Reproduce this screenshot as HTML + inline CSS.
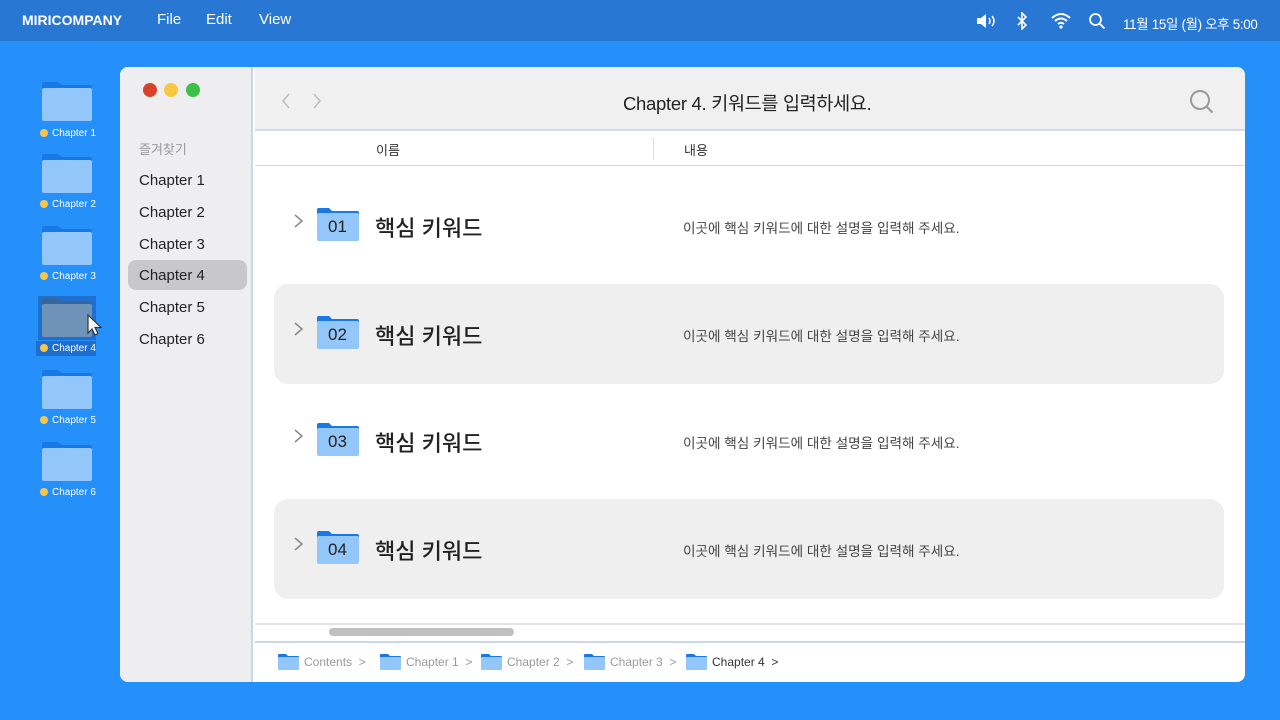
<!DOCTYPE html>
<html><head><meta charset="utf-8">
<style>
*{margin:0;padding:0;box-sizing:border-box}
body{width:1280px;height:720px;overflow:hidden;background:#2590fa;font-family:"Liberation Sans","Noto Sans CJK KR",sans-serif;position:relative}
.a{position:absolute}
.menu{left:0;top:0;width:1280px;height:41px;background:#2877d3;color:#fff}
.menu span{position:absolute;top:11px;font-size:15px}
.dl{font-size:10px;color:#fff;white-space:nowrap}
.dot{display:inline-block;width:8px;height:8px;border-radius:50%;background:#f7c648;margin-right:4px;vertical-align:-1px}
.win{left:120px;top:67px;width:1125px;height:615px;background:#fff;border-radius:8px;overflow:hidden}
.side{left:0;top:0;width:133px;height:615px;background:#eeeef1;border-right:2px solid #c9d6ec}
.side .it{position:absolute;left:19px;font-size:15px;color:#222}
.row{position:absolute;left:154px;width:950px;height:100px;border-radius:14px}
.kw{position:absolute;font-size:22px;color:#222;font-weight:500}
.desc{position:absolute;font-size:13.6px;color:#444;white-space:nowrap}
.bc{position:absolute;top:588px;font-size:12px;color:#999;white-space:nowrap}
</style></head><body>
<div class="a menu">
<span style="left:22px;font-weight:bold;font-size:14px;top:12px">MIRICOMPANY</span>
<span style="left:157px">File</span><span style="left:206px">Edit</span><span style="left:259px">View</span>
<svg class="a" style="left:976px;top:13px" width="22" height="16" viewBox="0 0 22 16"><path d="M1 5h4l5-4v14l-5-4H1z" fill="#fff"/><path d="M13 5q2 3 0 6M16 3q4 5 0 10" stroke="#fff" stroke-width="1.5" fill="none"/></svg>
<svg class="a" style="left:1016px;top:12px" width="12" height="18" viewBox="0 0 12 18"><path d="M2 5l8 8-4 4V1l4 4-8 8" stroke="#fff" stroke-width="1.6" fill="none"/></svg>
<svg class="a" style="left:1050px;top:12px" width="22" height="17" viewBox="0 0 22 17"><path d="M2 6q9-8 18 0M5 9q6-5 12 0M8 12q3-2.5 6 0" stroke="#fff" stroke-width="2" fill="none"/><circle cx="11" cy="15" r="1.6" fill="#fff"/></svg>
<svg class="a" style="left:1088px;top:12px" width="18" height="18" viewBox="0 0 18 18"><circle cx="7.5" cy="7.5" r="5.5" stroke="#fff" stroke-width="1.8" fill="none"/><path d="M11.5 11.5l5 5" stroke="#fff" stroke-width="1.8"/></svg>
<span style="left:1123px;font-size:13.4px;top:13px;letter-spacing:-0.3px">11월 15일 (월) 오후 5:00</span>
</div>

<svg class="a" style="left:0;top:0" width="120" height="520">
<defs><g id="f"><path d="M0 2a2 2 0 0 1 2-2h14l4 3h28a2 2 0 0 1 2 2v4H0z" fill="#1778e6"/><rect y="6" width="50" height="33" rx="2" fill="#93c7fa"/></g></defs>
<use href="#f" x="42" y="82"/><use href="#f" x="42" y="154"/><use href="#f" x="42" y="226"/>
<rect x="38" y="296" width="58" height="44" fill="#1f6fcf"/>
<g transform="translate(42 298)"><path d="M0 2a2 2 0 0 1 2-2h14l4 3h28a2 2 0 0 1 2 2v4H0z" fill="#35679e"/><rect y="6" width="50" height="33" rx="2" fill="#6f93b8"/></g>
<use href="#f" x="42" y="370"/><use href="#f" x="42" y="442"/>
<path d="M88 315l0 18 4-4 3 6 3-1.5-3-6 6 0z" fill="#fff" stroke="#333" stroke-width="1.2"/>
<rect x="36" y="341" width="60" height="15" fill="#1f6fcf"/>
</svg>
<div class="a dl" style="left:40px;top:128px"><span class="dot"></span>Chapter 1</div>
<div class="a dl" style="left:40px;top:199px"><span class="dot"></span>Chapter 2</div>
<div class="a dl" style="left:40px;top:271px"><span class="dot"></span>Chapter 3</div>
<div class="a dl" style="left:40px;top:343px"><span class="dot"></span>Chapter 4</div>
<div class="a dl" style="left:40px;top:415px"><span class="dot"></span>Chapter 5</div>
<div class="a dl" style="left:40px;top:487px"><span class="dot"></span>Chapter 6</div>

<div class="a win">
 <div class="a side">
  <div class="a" style="left:23px;top:16px;width:14px;height:14px;border-radius:50%;background:#d8422c"></div>
  <div class="a" style="left:44px;top:16px;width:14px;height:14px;border-radius:50%;background:#f9c640"></div>
  <div class="a" style="left:66px;top:16px;width:14px;height:14px;border-radius:50%;background:#3cc048"></div>
  <div class="it" style="top:72px;font-size:13px;color:#999">즐겨찾기</div>
  <div class="it" style="top:105px">Chapter 1</div>
  <div class="it" style="top:137px">Chapter 2</div>
  <div class="it" style="top:169px">Chapter 3</div>
  <div class="a" style="left:8px;top:193px;width:119px;height:30px;border-radius:8px;background:#c8c8cb"></div>
  <div class="it" style="top:200px">Chapter 4</div>
  <div class="it" style="top:232px">Chapter 5</div>
  <div class="it" style="top:264px">Chapter 6</div>
 </div>
 <div class="a" style="left:135px;top:0;width:990px;height:64px;background:#f0f0f0;border-bottom:2px solid #d2dcee"></div>
 <svg class="a" style="left:158px;top:25px" width="50" height="18"><path d="M11 2l-6 7 6 7M36 2l6 7-6 7" stroke="#bbb" stroke-width="1.5" fill="none"/></svg>
 <div class="a" style="left:503px;top:23px;font-size:18.5px;color:#222;letter-spacing:-0.3px">Chapter 4. 키워드를 입력하세요.</div>
 <svg class="a" style="left:1068px;top:21px" width="28" height="28"><circle cx="12" cy="12" r="9" stroke="#999" stroke-width="2" fill="none"/><path d="M18.5 18.5l6 6" stroke="#999" stroke-width="2.2"/></svg>
 <div class="a" style="left:256px;top:73px;font-size:13px;color:#333">이름</div>
 <div class="a" style="left:533px;top:71px;width:1px;height:22px;background:#ddd"></div>
 <div class="a" style="left:564px;top:73px;font-size:13px;color:#333">내용</div>
 <div class="a" style="left:135px;top:98px;width:990px;height:1px;background:#d8d8d8"></div>

 <div class="row" style="top:109px"></div>
 <div class="row" style="top:217px;background:#efeff0"></div>
 <div class="row" style="top:324px"></div>
 <div class="row" style="top:432px;background:#efeff0"></div>

 <svg class="a" style="left:0;top:0" width="1125" height="615">
  <defs><g id="g"><path d="M0 2a2 2 0 0 1 2-2h10l3 3h25a2 2 0 0 1 2 2v3H0z" fill="#1778e6"/><rect y="5" width="42" height="28" rx="2" fill="#93c7fa"/></g>
  <g id="s"><path d="M0 1a1 1 0 0 1 1-1h7l2 2h10a1 1 0 0 1 1 1v1H0z" fill="#1778e6"/><rect y="3" width="21" height="13" rx="1" fill="#93c7fa"/></g></defs>
  <use href="#g" x="197" y="141"/><use href="#g" x="197" y="249"/><use href="#g" x="197" y="356"/><use href="#g" x="197" y="464"/>
  <path d="M175 148l7 6-7 6M175 256l7 6-7 6M175 363l7 6-7 6M175 471l7 6-7 6" stroke="#888" stroke-width="1.5" fill="none"/>
  <use href="#s" x="158" y="587"/><use href="#s" x="260" y="587"/><use href="#s" x="361" y="587"/><use href="#s" x="464" y="587"/><use href="#s" x="566" y="587"/>
 </svg>
 <div class="a" style="left:208px;top:150px;font-size:17px;color:#222">01</div>
 <div class="a" style="left:208px;top:258px;font-size:17px;color:#222">02</div>
 <div class="a" style="left:208px;top:365px;font-size:17px;color:#222">03</div>
 <div class="a" style="left:208px;top:473px;font-size:17px;color:#222">04</div>
 <div class="kw" style="left:255px;top:144px">핵심 키워드</div>
 <div class="kw" style="left:255px;top:252px">핵심 키워드</div>
 <div class="kw" style="left:255px;top:359px">핵심 키워드</div>
 <div class="kw" style="left:255px;top:467px">핵심 키워드</div>
 <div class="desc" style="left:563px;top:150px">이곳에 핵심 키워드에 대한 설명을 입력해 주세요.</div>
 <div class="desc" style="left:563px;top:258px">이곳에 핵심 키워드에 대한 설명을 입력해 주세요.</div>
 <div class="desc" style="left:563px;top:365px">이곳에 핵심 키워드에 대한 설명을 입력해 주세요.</div>
 <div class="desc" style="left:563px;top:473px">이곳에 핵심 키워드에 대한 설명을 입력해 주세요.</div>

 <div class="a" style="left:135px;top:556px;width:990px;height:2px;background:#e3e3e6"></div>
 <div class="a" style="left:209px;top:561px;width:185px;height:8px;border-radius:4px;background:#c0c0c3"></div>
 <div class="a" style="left:135px;top:574px;width:990px;height:2px;background:#cbd8ec"></div>
 <div class="bc" style="left:184px">Contents &nbsp;&gt;</div>
 <div class="bc" style="left:286px">Chapter 1 &nbsp;&gt;</div>
 <div class="bc" style="left:387px">Chapter 2 &nbsp;&gt;</div>
 <div class="bc" style="left:490px">Chapter 3 &nbsp;&gt;</div>
 <div class="bc" style="left:592px;color:#333">Chapter 4 &nbsp;&gt;</div>
</div>
</body></html>
